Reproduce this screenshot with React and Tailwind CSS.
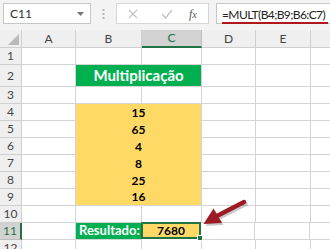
import React from 'react';

// column widths in px: row-number, A, B, C, D, E, F
const W = { n: 22, a: 54, b: 66, c: 60, d: 54, e: 55, f: 40 };
const grid = 'border-r border-b border-[#d4d4d4]';

const Cell = ({ w, className = '', children }) => (
  <div style={{ width: w }} className={`shrink-0 h-full flex items-center justify-center ${className}`}>
    {children}
  </div>
);

const RowNum = ({ n, active }) => (
  <Cell
    w={W.n}
    className={
      active
        ? 'bg-[#d2d2d2] text-[#217346] border-r-2 border-r-[#217346] border-b border-b-[#bdbdbd] text-[12px]'
        : 'bg-[#efefef] text-[#444] border-r border-b border-[#cfcfcf] text-[12px]'
    }
  >
    {n}
  </Cell>
);

const Empty = ({ w }) => <Cell w={w} className={`bg-white ${grid}`} />;

const Row = ({ n, h = 'h-[17px]', children, active }) => (
  <div className={`flex ${h}`}>
    <RowNum n={n} active={active} />
    {children}
  </div>
);

const Blank = ({ n, h }) => (
  <Row n={n} h={h}>
    <Empty w={W.a} />
    <Empty w={W.b} />
    <Empty w={W.c} />
    <Empty w={W.d} />
    <Empty w={W.e} />
    <Empty w={W.f} />
  </Row>
);

const YellowRow = ({ n, value }) => (
  <Row n={n}>
    <Empty w={W.a} />
    <Cell w={W.b + W.c} className="bg-[#ffd966] border-r border-r-[#d4d4d4] text-[12px] font-bold text-black">
      {value}
    </Cell>
    <Empty w={W.d} />
    <Empty w={W.e} />
    <Empty w={W.f} />
  </Row>
);

const App = () => {
  return (
    <div className="relative w-[330px] h-[249px] overflow-hidden bg-white" style={{ fontFamily: 'Lato, "Liberation Sans", sans-serif' }}>
      {/* Formula bar */}
      <div className="h-[30px] bg-[#f3f3f3] flex items-start pt-[3px] pl-[3px]">
        <div className="w-[88px] h-[21px] bg-white border border-[#c6c6c6] flex items-center justify-between pl-[6px] pr-[6px] text-[12px] text-[#333]">
          <span>C11</span>
          <svg width="7" height="4" viewBox="0 0 7 4"><path d="M0 0h7L3.5 4z" fill="#777" /></svg>
        </div>
        <div className="w-[25px] h-[21px] flex items-center justify-center">
          <svg width="3" height="10" viewBox="0 0 3 10" fill="#b8b8b8">
            <rect x="0.5" y="0" width="2" height="2" />
            <rect x="0.5" y="4" width="2" height="2" />
            <rect x="0.5" y="8" width="2" height="2" />
          </svg>
        </div>
        <div className="w-[93px] h-[21px] bg-white border border-[#d6d6d6] flex items-center">
          <svg className="ml-[11px]" width="10" height="10" viewBox="0 0 10 10" stroke="#c3c3c3" strokeWidth="1.3">
            <path d="M1 1l8 8M9 1l-8 8" />
          </svg>
          <svg className="ml-[23px]" width="12" height="10" viewBox="0 0 12 10" stroke="#c3c3c3" strokeWidth="1.4" fill="none">
            <path d="M1 5l3.5 4L11 1" />
          </svg>
          <span className="ml-[16px] text-[12px] italic text-[#555]" style={{ fontFamily: '"Liberation Serif", serif' }}>
            f<span className="text-[10px]">x</span>
          </span>
        </div>
        <div className="ml-[7px] flex-1 h-[21px] bg-white border border-[#c6c6c6] border-r-0 relative">
          <span className="absolute left-[5px] top-[2px] text-[12px] text-[#222] tracking-[-0.6px] whitespace-nowrap">=MULT(B4;B9;B6:C7)</span>
          <div className="absolute left-[5px] right-[2px] top-[18px] h-[2px] bg-[#b0181e]" />
        </div>
      </div>

      {/* Column headers */}
      <div className="flex h-[18px] text-[12px] text-[#444]">
        <Cell w={W.n} className="bg-[#efefef] border-r border-b border-[#cfcfcf] relative">
          <svg className="absolute right-[2px] bottom-[2px]" width="11" height="11" viewBox="0 0 11 11">
            <path d="M11 0v11H0z" fill="#b9b9b9" />
          </svg>
        </Cell>
        <Cell w={W.a} className="bg-[#efefef] border-r border-b border-[#cfcfcf]">A</Cell>
        <Cell w={W.b} className="bg-[#efefef] border-r border-b border-[#cfcfcf]">B</Cell>
        <Cell w={W.c} className="bg-[#d2d2d2] text-[#217346] border-r border-r-[#bdbdbd] border-b-2 border-b-[#217346]">C</Cell>
        <Cell w={W.d} className="bg-[#efefef] border-r border-b border-[#cfcfcf]">D</Cell>
        <Cell w={W.e} className="bg-[#efefef] border-r border-b border-[#cfcfcf]">E</Cell>
        <Cell w={W.f} className="bg-[#efefef] border-b border-[#cfcfcf]" />
      </div>

      <Blank n={1} />
      <Row n={2} h="h-[22px]">
        <Empty w={W.a} />
        <Cell w={W.b + W.c} className="bg-[#00b050] border-r border-b border-[#d4d4d4] text-white font-bold text-[15px]">
          Multiplicação
        </Cell>
        <Empty w={W.d} />
        <Empty w={W.e} />
        <Empty w={W.f} />
      </Row>
      <Blank n={3} />
      <YellowRow n={4} value="15" />
      <YellowRow n={5} value="65" />
      <YellowRow n={6} value="4" />
      <YellowRow n={7} value="8" />
      <YellowRow n={8} value="25" />
      <Row n={9}>
        <Empty w={W.a} />
        <Cell w={W.b + W.c} className="bg-[#ffd966] border-r border-b border-[#d4d4d4] text-[12px] font-bold text-black">
          16
        </Cell>
        <Empty w={W.d} />
        <Empty w={W.e} />
        <Empty w={W.f} />
      </Row>
      <Blank n={10} />
      <Row n={11} active>
        <Empty w={W.a} />
        <Cell w={W.b} className="bg-[#00b050] border-r border-b border-[#d4d4d4] text-white font-bold text-[13px] justify-start pl-[3px]">
          Resultado:
        </Cell>
        <Cell w={W.c} className="bg-[#ffd966] border-2 border-[#217346] text-[12px] font-bold text-black relative -ml-px -mt-px h-[18px]">
          7680
          <div className="absolute -right-[4px] -bottom-[4px] w-[6px] h-[6px] bg-[#217346] border border-white" />
        </Cell>
        <Empty w={W.d} />
        <Empty w={W.e} />
        <Empty w={W.f} />
      </Row>
      <Blank n={12} />

      {/* Red arrow pointing at the result */}
      <svg className="absolute left-0 top-0 pointer-events-none" width="330" height="249" viewBox="0 0 330 249">
        <g transform="translate(1.5,2)" opacity="0.3">
          <path d="M244 202L217 216" stroke="#555" strokeWidth="4.5" strokeLinecap="round" />
          <path d="M204 224L214 209L222 223z" fill="#555" />
        </g>
        <path d="M244 202L217 216" stroke="#9b1c24" strokeWidth="4.5" strokeLinecap="round" />
        <path d="M203.5 224L213.5 208.5L222 223z" fill="#9b1c24" />
      </svg>
    </div>
  );
};

export default App;
